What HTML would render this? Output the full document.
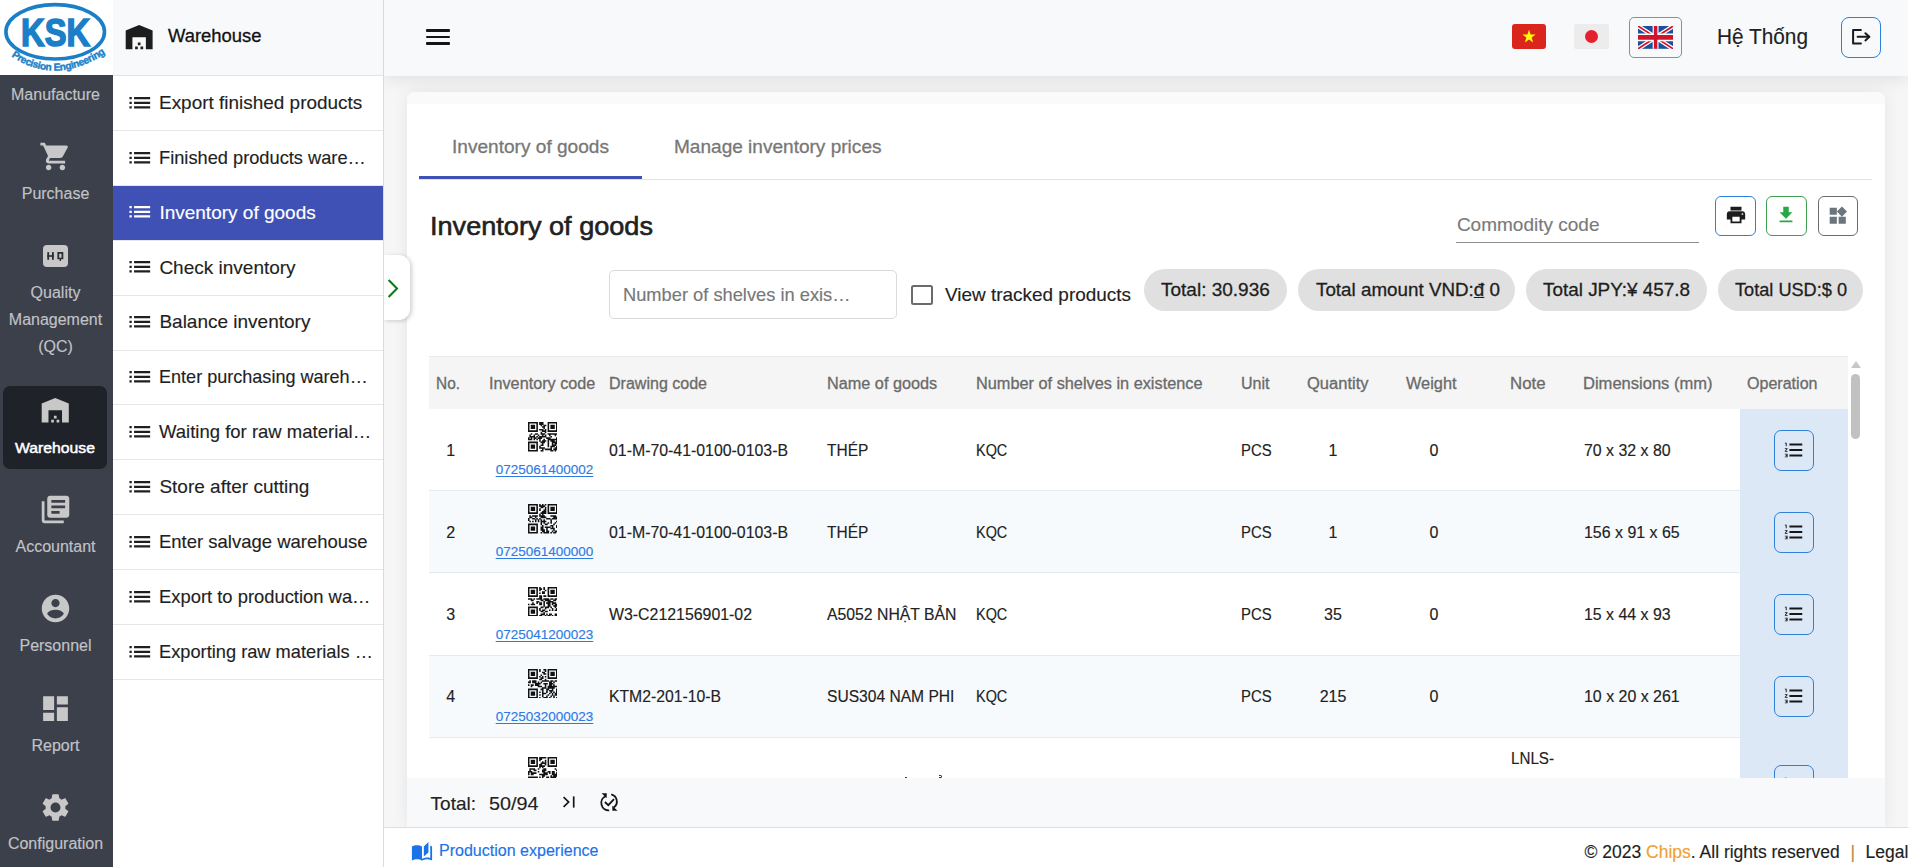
<!DOCTYPE html>
<html><head><meta charset="utf-8">
<style>
*{box-sizing:border-box;margin:0;padding:0}
html,body{width:1908px;height:867px;overflow:hidden;font-family:"Liberation Sans",sans-serif;background:#f6f6f6;color:#212121;position:relative}
.a{position:absolute}
.t{position:absolute;line-height:1;white-space:nowrap;-webkit-text-stroke:0.15px currentColor}
.med{-webkit-text-stroke:0.3px currentColor}
</style></head><body>

<div class="a" style="left:384.00px;top:0.00px;width:1524.00px;height:76.00px;background:#f8f9fb;box-shadow:0 3px 16px rgba(0,0,0,.095);z-index:2"></div>
<div class="a" style="left:407.00px;top:92.00px;width:1478.00px;height:735.00px;background:#fff;border-radius:8px 8px 0 0;box-shadow:0 0 16px rgba(0,0,0,.075)"></div>
<div class="a" style="left:407.00px;top:92.00px;width:1478.00px;height:12.00px;background:#fafafa;border-radius:8px 8px 0 0"></div>
<div class="a" style="left:384.00px;top:827.00px;width:1524.00px;height:40.00px;background:#fff;border-top:1px solid #dedede;z-index:3"></div>
<div class="a" style="left:0.00px;top:0.00px;width:113.00px;height:75.00px;background:#fff"></div>
<div class="a" style="left:0.00px;top:75.00px;width:113.00px;height:792.00px;background:#3b404b"></div>
<svg class="a" style="left:0;top:0" width="113" height="75" viewBox="0 0 113 75">
<ellipse cx="55.2" cy="31.8" rx="49.3" ry="27.2" fill="none" stroke="#1b7fc7" stroke-width="3.6"/>
<text x="55.6" y="45.6" text-anchor="middle" font-family="Liberation Sans" font-weight="700" font-size="38.5" fill="#1b7fc7" stroke="#1b7fc7" stroke-width="1.6" textLength="69" lengthAdjust="spacingAndGlyphs">KSK</text>
<path id="arc" d="M10.5 55.5 Q56 88 109 51" fill="none"/>
<text font-family="Liberation Sans" font-weight="700" font-size="10.2" fill="#1b7fc7" stroke="#1b7fc7" stroke-width="0.4" textLength="101" lengthAdjust="spacing"><textPath href="#arc" startOffset="1">Precision Engineering</textPath></text>
</svg>
<div class="t" style="left:-0.50px;width:112px;text-align:center;top:87.46px;font-size:16px;color:#c1c3c7;font-weight:400;">Manufacture</div>
<svg class="a" style="left:38.70px;top:140.25px;" width="33" height="33" viewBox="0 0 24 24"><path fill="#c8c8c8" d="M7 18c-1.1 0-1.99.9-1.99 2S5.9 22 7 22s2-.9 2-2-.9-2-2-2zM1 2v2h2l3.6 7.59-1.35 2.45c-.16.28-.25.61-.25.96 0 1.1.9 2 2 2h12v-2H7.42c-.14 0-.25-.11-.25-.25l.03-.12.9-1.63h7.45c.75 0 1.41-.41 1.75-1.03l3.58-6.49A1.003 1.003 0 0020 4H5.21l-.94-2H1zm16 16c-1.1 0-1.99.9-1.99 2s.89 2 1.99 2 2-.9 2-2-.9-2-2-2z"/></svg>
<div class="t" style="left:-0.50px;width:112px;text-align:center;top:186.06px;font-size:16px;color:#c1c3c7;font-weight:400;">Purchase</div>
<div class="a" style="left:42.80px;top:245.00px;width:25.00px;height:21.80px;background:#c8c8c8;border-radius:4px"></div>
<svg class="a" style="left:35px;top:238px" width="40" height="34" viewBox="0 0 40 34"><g fill="#2a2d33"><rect x="12.3" y="14.1" width="1.8" height="7.7"/><rect x="17" y="14.1" width="1.8" height="7.7"/><rect x="12.3" y="17.2" width="6.5" height="1.6"/><path fill-rule="evenodd" d="M22.4 14.1h5.9v7.2h-2.3v1.8h-1.3v-1.8h-2.3z M24.2 15.7v4h2.3v-4z"/></g></svg>
<div class="t" style="left:-0.50px;width:112px;text-align:center;top:285.06px;font-size:16px;color:#c1c3c7;font-weight:400;">Quality</div>
<div class="t" style="left:-0.50px;width:112px;text-align:center;top:312.46px;font-size:16px;color:#c1c3c7;font-weight:400;">Management</div>
<div class="t" style="left:-0.50px;width:112px;text-align:center;top:339.16px;font-size:16px;color:#c1c3c7;font-weight:400;">(QC)</div>
<div class="a" style="left:3.00px;top:386.00px;width:104.00px;height:82.70px;background:#1f2229;border-radius:7px"></div>
<svg class="a" style="left:38.80px;top:393.60px;" width="32.5" height="32.5" viewBox="0 0 24 24"><path fill="#c8c8c8" d="M22 21V7L12 3 2 7v14h5v-9h10v9h5zm-11-2H9v2h2v-2zm2-3h-2v2h2v-2zm2 3h-2v2h2v-2z"/></svg>
<div class="t " style="left:15.10px;top:439.88px;font-size:15.5px;color:#ffffff;font-weight:400;-webkit-text-stroke:0.5px #fff;transform:scaleX(1.0165);transform-origin:0 0;">Warehouse</div>
<svg class="a" style="left:38.75px;top:492.95px;" width="33" height="33" viewBox="0 0 24 24"><path fill="#c8c8c8" d="M4 6H2v14c0 1.1.9 2 2 2h14v-2H4V6zm16-4H8c-1.1 0-2 .9-2 2v12c0 1.1.9 2 2 2h12c1.1 0 2-.9 2-2V4c0-1.1-.9-2-2-2zm-1 9H9V9h10v2zm-4 4H9v-2h6v2zm4-8H9V5h10v2z"/></svg>
<div class="t" style="left:-0.50px;width:112px;text-align:center;top:538.66px;font-size:16px;color:#c1c3c7;font-weight:400;">Accountant</div>
<svg class="a" style="left:38.65px;top:592.15px;" width="33" height="33" viewBox="0 0 24 24"><path fill="#c8c8c8" d="M12 2C6.48 2 2 6.48 2 12s4.48 10 10 10 10-4.48 10-10S17.52 2 12 2zm0 3c1.66 0 3 1.34 3 3s-1.34 3-3 3-3-1.34-3-3 1.34-3 3-3zm0 14.2c-2.5 0-4.71-1.28-6-3.22.03-1.99 4-3.08 6-3.08 1.99 0 5.970 1.09 6 3.08-1.29 1.94-3.5 3.22-6 3.22z"/></svg>
<div class="t" style="left:-0.50px;width:112px;text-align:center;top:638.46px;font-size:16px;color:#c1c3c7;font-weight:400;">Personnel</div>
<svg class="a" style="left:38.85px;top:691.75px;" width="33" height="33" viewBox="0 0 24 24"><path fill="#c8c8c8" d="M3 13h8V3H3v10zm0 8h8v-6H3v6zm10 0h8V11h-8v10zm0-18v6h8V3h-8z"/></svg>
<div class="t" style="left:-0.50px;width:112px;text-align:center;top:737.96px;font-size:16px;color:#c1c3c7;font-weight:400;">Report</div>
<svg class="a" style="left:38.70px;top:790.90px;" width="33" height="33" viewBox="0 0 24 24"><path fill="#c8c8c8" d="M19.14 12.94c.04-.3.06-.61.06-.94 0-.32-.02-.64-.07-.94l2.03-1.58c.18-.14.23-.41.12-.61l-1.92-3.32c-.12-.22-.37-.29-.59-.22l-2.39.96c-.5-.38-1.030-.7-1.62-.94l-.36-2.54c-.04-.24-.24-.41-.48-.41h-3.84c-.24 0-.43.17-.47.41l-.36 2.54c-.59.24-1.13.57-1.62.94l-2.39-.96c-.22-.08-.47 0-.59.22L2.74 8.87c-.12.21-.08.47.12.61l2.03 1.58c-.05.3-.09.63-.09.94s.02.64.07.94l-2.03 1.58c-.18.14-.23.41-.12.61l1.92 3.32c.12.22.37.29.59.22l2.39-.96c.5.38 1.03.7 1.62.94l.36 2.54c.05.24.24.41.48.41h3.84c.24 0 .44-.17.47-.41l.36-2.54c.59-.24 1.13-.56 1.62-.94l2.39.96c.22.08.47 0 .59-.22l1.92-3.32c.12-.22.07-.47-.12-.61l-2.01-1.58zM12 15.6c-1.98 0-3.6-1.62-3.6-3.6s1.62-3.6 3.6-3.6 3.6 1.62 3.6 3.6-1.62 3.6-3.6 3.6z"/></svg>
<div class="t" style="left:-0.50px;width:112px;text-align:center;top:836.46px;font-size:16px;color:#c1c3c7;font-weight:400;">Configuration</div>
<div class="a" style="left:113.00px;top:0.00px;width:271.00px;height:867.00px;background:#fff;border-right:1px solid #dadada;z-index:4"></div>
<div class="a" style="left:113.00px;top:0.00px;width:270.00px;height:76.00px;background:#f8f9fb;border-bottom:1px solid #e3e3e3;z-index:4"></div>
<svg class="a" style="left:123.40px;top:20.90px;z-index:5" width="32.3" height="32.3" viewBox="0 0 24 24"><path fill="#1d1d1d" d="M22 21V7L12 3 2 7v14h5v-9h10v9h5zm-11-2H9v2h2v-2zm2-3h-2v2h2v-2zm2 3h-2v2h2v-2z"/></svg>
<div class="t med" style="left:167.80px;top:27.24px;font-size:18.5px;color:#111;font-weight:400;z-index:5;transform:scaleX(0.9955);transform-origin:0 0;">Warehouse</div>
<div class="a" style="left:113.00px;top:76.10px;width:270.00px;height:54.90px;background:#fff;border-bottom:1px solid #e6e6e6;z-index:4"></div>
<svg class="a" style="left:125.85px;top:88.65px;z-index:5" width="27.6" height="27.6" viewBox="0 0 24 24"><path fill="#1f1f1f" d="M3 13h2v-2H3v2zm0 4h2v-2H3v2zm0-8h2V7H3v2zm4 4h14v-2H7v2zm0 4h14v-2H7v2zM7 7v2h14V7H7z"/></svg>
<div class="t " style="left:159.40px;top:92.82px;font-size:19px;color:#1f1f1f;font-weight:400;z-index:5;transform:scaleX(0.9973);transform-origin:0 0;">Export finished products</div>
<div class="a" style="left:113.00px;top:131.00px;width:270.00px;height:54.90px;background:#fff;border-bottom:1px solid #e6e6e6;z-index:4"></div>
<svg class="a" style="left:125.85px;top:143.55px;z-index:5" width="27.6" height="27.6" viewBox="0 0 24 24"><path fill="#1f1f1f" d="M3 13h2v-2H3v2zm0 4h2v-2H3v2zm0-8h2V7H3v2zm4 4h14v-2H7v2zm0 4h14v-2H7v2zM7 7v2h14V7H7z"/></svg>
<div class="t " style="left:159.40px;top:147.72px;font-size:19px;color:#1f1f1f;font-weight:400;z-index:5;transform:scaleX(0.9599);transform-origin:0 0;">Finished products ware…</div>
<div class="a" style="left:113.00px;top:185.90px;width:270.00px;height:54.90px;background:#3f51b5;border-bottom:1px solid #e6e6e6;z-index:4"></div>
<svg class="a" style="left:125.85px;top:198.45px;z-index:5" width="27.6" height="27.6" viewBox="0 0 24 24"><path fill="#fff" d="M3 13h2v-2H3v2zm0 4h2v-2H3v2zm0-8h2V7H3v2zm4 4h14v-2H7v2zm0 4h14v-2H7v2zM7 7v2h14V7H7z"/></svg>
<div class="t " style="left:159.40px;top:202.62px;font-size:19px;color:#fff;font-weight:400;z-index:5">Inventory of goods</div>
<div class="a" style="left:113.00px;top:240.80px;width:270.00px;height:54.90px;background:#fff;border-bottom:1px solid #e6e6e6;z-index:4"></div>
<svg class="a" style="left:125.85px;top:253.35px;z-index:5" width="27.6" height="27.6" viewBox="0 0 24 24"><path fill="#1f1f1f" d="M3 13h2v-2H3v2zm0 4h2v-2H3v2zm0-8h2V7H3v2zm4 4h14v-2H7v2zm0 4h14v-2H7v2zM7 7v2h14V7H7z"/></svg>
<div class="t " style="left:159.40px;top:257.52px;font-size:19px;color:#1f1f1f;font-weight:400;z-index:5">Check inventory</div>
<div class="a" style="left:113.00px;top:295.70px;width:270.00px;height:54.90px;background:#fff;border-bottom:1px solid #e6e6e6;z-index:4"></div>
<svg class="a" style="left:125.85px;top:308.25px;z-index:5" width="27.6" height="27.6" viewBox="0 0 24 24"><path fill="#1f1f1f" d="M3 13h2v-2H3v2zm0 4h2v-2H3v2zm0-8h2V7H3v2zm4 4h14v-2H7v2zm0 4h14v-2H7v2zM7 7v2h14V7H7z"/></svg>
<div class="t " style="left:159.40px;top:312.42px;font-size:19px;color:#1f1f1f;font-weight:400;z-index:5">Balance inventory</div>
<div class="a" style="left:113.00px;top:350.60px;width:270.00px;height:54.90px;background:#fff;border-bottom:1px solid #e6e6e6;z-index:4"></div>
<svg class="a" style="left:125.85px;top:363.15px;z-index:5" width="27.6" height="27.6" viewBox="0 0 24 24"><path fill="#1f1f1f" d="M3 13h2v-2H3v2zm0 4h2v-2H3v2zm0-8h2V7H3v2zm4 4h14v-2H7v2zm0 4h14v-2H7v2zM7 7v2h14V7H7z"/></svg>
<div class="t " style="left:159.40px;top:367.32px;font-size:19px;color:#1f1f1f;font-weight:400;z-index:5;transform:scaleX(0.9501);transform-origin:0 0;">Enter purchasing wareh…</div>
<div class="a" style="left:113.00px;top:405.50px;width:270.00px;height:54.90px;background:#fff;border-bottom:1px solid #e6e6e6;z-index:4"></div>
<svg class="a" style="left:125.85px;top:418.05px;z-index:5" width="27.6" height="27.6" viewBox="0 0 24 24"><path fill="#1f1f1f" d="M3 13h2v-2H3v2zm0 4h2v-2H3v2zm0-8h2V7H3v2zm4 4h14v-2H7v2zm0 4h14v-2H7v2zM7 7v2h14V7H7z"/></svg>
<div class="t " style="left:159.40px;top:422.22px;font-size:19px;color:#1f1f1f;font-weight:400;z-index:5;transform:scaleX(0.9740);transform-origin:0 0;">Waiting for raw material…</div>
<div class="a" style="left:113.00px;top:460.40px;width:270.00px;height:54.90px;background:#fff;border-bottom:1px solid #e6e6e6;z-index:4"></div>
<svg class="a" style="left:125.85px;top:472.95px;z-index:5" width="27.6" height="27.6" viewBox="0 0 24 24"><path fill="#1f1f1f" d="M3 13h2v-2H3v2zm0 4h2v-2H3v2zm0-8h2V7H3v2zm4 4h14v-2H7v2zm0 4h14v-2H7v2zM7 7v2h14V7H7z"/></svg>
<div class="t " style="left:159.40px;top:477.12px;font-size:19px;color:#1f1f1f;font-weight:400;z-index:5">Store after cutting</div>
<div class="a" style="left:113.00px;top:515.30px;width:270.00px;height:54.90px;background:#fff;border-bottom:1px solid #e6e6e6;z-index:4"></div>
<svg class="a" style="left:125.85px;top:527.85px;z-index:5" width="27.6" height="27.6" viewBox="0 0 24 24"><path fill="#1f1f1f" d="M3 13h2v-2H3v2zm0 4h2v-2H3v2zm0-8h2V7H3v2zm4 4h14v-2H7v2zm0 4h14v-2H7v2zM7 7v2h14V7H7z"/></svg>
<div class="t " style="left:159.40px;top:532.02px;font-size:19px;color:#1f1f1f;font-weight:400;z-index:5;transform:scaleX(0.9728);transform-origin:0 0;">Enter salvage warehouse</div>
<div class="a" style="left:113.00px;top:570.20px;width:270.00px;height:54.90px;background:#fff;border-bottom:1px solid #e6e6e6;z-index:4"></div>
<svg class="a" style="left:125.85px;top:582.75px;z-index:5" width="27.6" height="27.6" viewBox="0 0 24 24"><path fill="#1f1f1f" d="M3 13h2v-2H3v2zm0 4h2v-2H3v2zm0-8h2V7H3v2zm4 4h14v-2H7v2zm0 4h14v-2H7v2zM7 7v2h14V7H7z"/></svg>
<div class="t " style="left:159.40px;top:586.92px;font-size:19px;color:#1f1f1f;font-weight:400;z-index:5;transform:scaleX(0.9674);transform-origin:0 0;">Export to production wa…</div>
<div class="a" style="left:113.00px;top:625.10px;width:270.00px;height:54.90px;background:#fff;border-bottom:1px solid #e6e6e6;z-index:4"></div>
<svg class="a" style="left:125.85px;top:637.65px;z-index:5" width="27.6" height="27.6" viewBox="0 0 24 24"><path fill="#1f1f1f" d="M3 13h2v-2H3v2zm0 4h2v-2H3v2zm0-8h2V7H3v2zm4 4h14v-2H7v2zm0 4h14v-2H7v2zM7 7v2h14V7H7z"/></svg>
<div class="t " style="left:159.40px;top:641.82px;font-size:19px;color:#1f1f1f;font-weight:400;z-index:5;transform:scaleX(0.9601);transform-origin:0 0;">Exporting raw materials …</div>
<div class="a" style="left:384px;top:254.5px;width:25.5px;height:65px;background:#fff;border-radius:0 11px 11px 0;box-shadow:2px 1px 4px rgba(0,0,0,.18);z-index:3"></div>
<svg class="a" style="left:384px;top:254.5px;z-index:4" width="26" height="65" viewBox="0 0 26 65"><path d="M4.6 25 L13 33.5 L4.6 42" fill="none" stroke="#0b7d16" stroke-width="2.1"/></svg>
<div class="a" style="left:425.80px;top:29.20px;width:24.20px;height:2.60px;background:#151515;border-radius:1px;z-index:3"></div>
<div class="a" style="left:425.80px;top:35.70px;width:24.20px;height:2.60px;background:#151515;border-radius:1px;z-index:3"></div>
<div class="a" style="left:425.80px;top:42.30px;width:24.20px;height:2.60px;background:#151515;border-radius:1px;z-index:3"></div>
<div class="a" style="left:1512.00px;top:24.20px;width:34.10px;height:24.60px;background:#da251d;border-radius:3px;z-index:3"></div>
<svg class="a" style="left:1512px;top:24.2px;z-index:4" width="34" height="25" viewBox="0 0 34 25"><polygon fill="#ffff00" points="17,5.8 18.6,10.6 23.6,10.6 19.6,13.6 21.1,18.4 17,15.5 12.9,18.4 14.4,13.6 10.4,10.6 15.4,10.6"/></svg>
<div class="a" style="left:1574.40px;top:24.20px;width:34.60px;height:24.60px;background:#ececec;border-radius:2px;z-index:3"></div>
<div class="a" style="left:1584.9px;top:29.7px;width:13.6px;height:13.6px;border-radius:50%;background:#e5202f;z-index:4"></div>
<div class="a" style="left:1629.10px;top:17.10px;width:52.80px;height:40.60px;border:1px solid #4ba6c6;border-radius:5px;background:#f8f9fb;z-index:3"></div>
<svg class="a" style="left:1637.8px;top:26px;z-index:4" width="35.2" height="22.8" viewBox="0 0 60 30" preserveAspectRatio="none">
<rect width="60" height="30" fill="#1f4e9c"/>
<path d="M0,0 L60,30 M60,0 L0,30" stroke="#fff" stroke-width="6"/>
<path d="M0,0 L60,30 M60,0 L0,30" stroke="#cf142b" stroke-width="2.4"/>
<path d="M30,0 V30 M0,15 H60" stroke="#fff" stroke-width="10"/>
<path d="M30,0 V30 M0,15 H60" stroke="#cf142b" stroke-width="6"/>
</svg>
<div class="t " style="left:1716.80px;top:26.18px;font-size:22px;color:#222;font-weight:400;z-index:3;transform:scaleX(0.9458);transform-origin:0 0;">Hệ Thống</div>
<div class="a" style="left:1841.00px;top:17.10px;width:40.00px;height:40.60px;border:1.3px solid #2e7fd8;border-radius:8px;background:#f8f9fb;z-index:3"></div>
<svg class="a" style="left:1841px;top:17px;z-index:4" width="40" height="40" viewBox="0 0 40 40">
<path d="M19.9 13 H12.1 V26.6 H19.9" fill="none" stroke="#1a1a1a" stroke-width="2" stroke-linejoin="round" stroke-linecap="round"/>
<path d="M16.6 19.8 H28.2" fill="none" stroke="#1a1a1a" stroke-width="2" stroke-linecap="round"/>
<path d="M24.4 16.2 L28.3 19.8 L24.4 23.4" fill="none" stroke="#1a1a1a" stroke-width="2" stroke-linecap="round" stroke-linejoin="round"/>
</svg>
<div class="t med" style="left:452.20px;top:136.62px;font-size:19px;color:#777;font-weight:400;;transform:scaleX(1.0043);transform-origin:0 0;">Inventory of goods</div>
<div class="t med" style="left:674.30px;top:136.62px;font-size:19px;color:#777;font-weight:400;;transform:scaleX(1.0024);transform-origin:0 0;">Manage inventory prices</div>
<div class="a" style="left:419.00px;top:179.00px;width:1453.00px;height:1.00px;background:#e3e3e3"></div>
<div class="a" style="left:418.80px;top:176.00px;width:223.00px;height:3.00px;background:#3f51b5"></div>
<div class="t " style="left:430.20px;top:213.47px;font-size:26.5px;color:#212121;font-weight:400;-webkit-text-stroke:0.6px #212121;transform:scaleX(1.0228);transform-origin:0 0;">Inventory of goods</div>
<div class="t " style="left:1456.90px;top:214.72px;font-size:19px;color:#7a7a7a;font-weight:400;">Commodity code</div>
<div class="a" style="left:1456.20px;top:241.60px;width:243.00px;height:1.00px;background:#8d8d8d"></div>
<div class="a" style="left:1715.00px;top:196.10px;width:40.90px;height:39.50px;border:1.3px solid #2f80d6;border-radius:6px"></div>
<svg class="a" style="left:1724.50px;top:203.50px;" width="22" height="22" viewBox="0 0 24 24"><path fill="#1c1c1c" d="M19 8H5c-1.66 0-3 1.34-3 3v6h4v4h12v-4h4v-6c0-1.66-1.34-3-3-3zm-3 11H8v-5h8v5zm3-7c-.55 0-1-.45-1-1s.45-1 1-1 1 .45 1 1-.45 1-1 1zm-1-9H6v4h12V3z"/></svg>
<div class="a" style="left:1766.00px;top:196.10px;width:40.90px;height:39.50px;border:1.3px solid #3f9e4f;border-radius:6px"></div>
<svg class="a" style="left:1775.30px;top:203.80px;" width="22" height="22" viewBox="0 0 24 24"><path fill="#28a745" d="M19 9h-4V3H9v6H5l7 7 7-7zM5 18v2h14v-2H5z"/></svg>
<div class="a" style="left:1818.10px;top:196.10px;width:39.60px;height:39.50px;border:1.3px solid #6c6c6c;border-radius:6px"></div>
<svg class="a" style="left:1826.60px;top:204.60px;" width="21.5" height="21.5" viewBox="0 0 24 24"><path fill="#6c757d" d="M13 13v8h8v-8h-8zM3 21h8v-8H3v8zM3 3v8h8V3H3zm13.66-1.31L11 7.34 16.66 13l5.66-5.66-5.66-5.650z"/></svg>
<div class="a" style="left:608.50px;top:269.50px;width:288.50px;height:49.00px;border:1px solid #dadada;border-radius:5px"></div>
<div class="t " style="left:623.00px;top:284.92px;font-size:19px;color:#777;font-weight:400;;transform:scaleX(0.9618);transform-origin:0 0;">Number of shelves in exis…</div>
<div class="a" style="left:911.10px;top:285.40px;width:21.60px;height:20.10px;border:2px solid #6b6b6b;border-radius:2.5px"></div>
<div class="t " style="left:944.60px;top:284.92px;font-size:19px;color:#222;font-weight:400;;transform:scaleX(0.9969);transform-origin:0 0;">View tracked products</div>
<div class="a" style="left:1144.10px;top:269.10px;width:142.60px;height:42.40px;background:#e0e0e0;border-radius:22px"></div>
<div class="t med" style="left:1161.20px;top:280.22px;font-size:19px;color:#1e1e1e;font-weight:400;;transform:scaleX(0.9999);transform-origin:0 0;">Total: 30.936</div>
<div class="a" style="left:1298.00px;top:269.10px;width:217.40px;height:42.40px;background:#e0e0e0;border-radius:22px"></div>
<div class="t med" style="left:1315.60px;top:280.22px;font-size:19px;color:#1e1e1e;font-weight:400;;transform:scaleX(0.9897);transform-origin:0 0;">Total amount VND:<u>đ</u> 0</div>
<div class="a" style="left:1526.30px;top:269.10px;width:180.30px;height:42.40px;background:#e0e0e0;border-radius:22px"></div>
<div class="t med" style="left:1543.40px;top:280.22px;font-size:19px;color:#1e1e1e;font-weight:400;;transform:scaleX(0.9940);transform-origin:0 0;">Total JPY:¥ 457.8</div>
<div class="a" style="left:1717.90px;top:269.10px;width:145.20px;height:42.40px;background:#e0e0e0;border-radius:22px"></div>
<div class="t med" style="left:1735.00px;top:280.22px;font-size:19px;color:#1e1e1e;font-weight:400;;transform:scaleX(0.9554);transform-origin:0 0;">Total USD:$ 0</div>
<div class="a" style="left:429.00px;top:356.00px;width:1419.00px;height:53.10px;background:#f5f5f5;border-top:1px solid #e6ebf0"></div>
<div class="t med" style="left:435.80px;top:376.26px;font-size:16px;color:#6a6a6a;font-weight:400;;transform:scaleX(0.9636);transform-origin:0 0;">No.</div>
<div class="t med" style="left:489.30px;top:376.26px;font-size:16px;color:#6a6a6a;font-weight:400;;transform:scaleX(1.0128);transform-origin:0 0;">Inventory code</div>
<div class="t med" style="left:609.40px;top:376.26px;font-size:16px;color:#6a6a6a;font-weight:400;;transform:scaleX(1.0018);transform-origin:0 0;">Drawing code</div>
<div class="t med" style="left:827.30px;top:376.26px;font-size:16px;color:#6a6a6a;font-weight:400;;transform:scaleX(1.0155);transform-origin:0 0;">Name of goods</div>
<div class="t med" style="left:976.00px;top:376.26px;font-size:16px;color:#6a6a6a;font-weight:400;;transform:scaleX(1.0188);transform-origin:0 0;">Number of shelves in existence</div>
<div class="t med" style="left:1241.00px;top:376.26px;font-size:16px;color:#6a6a6a;font-weight:400;;transform:scaleX(1.0016);transform-origin:0 0;">Unit</div>
<div class="t med" style="left:1307.00px;top:376.26px;font-size:16px;color:#6a6a6a;font-weight:400;;transform:scaleX(1.0320);transform-origin:0 0;">Quantity</div>
<div class="t med" style="left:1406.00px;top:376.26px;font-size:16px;color:#6a6a6a;font-weight:400;;transform:scaleX(1.0199);transform-origin:0 0;">Weight</div>
<div class="t med" style="left:1510.00px;top:376.26px;font-size:16px;color:#6a6a6a;font-weight:400;;transform:scaleX(1.0504);transform-origin:0 0;">Note</div>
<div class="t med" style="left:1583.00px;top:376.26px;font-size:16px;color:#6a6a6a;font-weight:400;;transform:scaleX(1.0332);transform-origin:0 0;">Dimensions (mm)</div>
<div class="t med" style="left:1747.00px;top:376.26px;font-size:16px;color:#6a6a6a;font-weight:400;;transform:scaleX(1.0033);transform-origin:0 0;">Operation</div>
<div class="a" style="left:429.00px;top:409.10px;width:1419.00px;height:82.15px;background:#fff;border-bottom:1px solid #e6ebf0"></div>
<div class="t" style="left:430.70px;width:40px;text-align:center;top:442.56px;font-size:16px;color:#222;font-weight:400;">1</div>
<svg class="a" style="left:527.50px;top:422.30px" width="29.5" height="29.5" viewBox="0 0 21 21"><path fill="#111" d="M-0.06 -0.06h7.12v1.12h-7.12zM7.94 -0.06h3.12v1.12h-3.12zM13.94 -0.06h7.12v1.12h-7.12zM-0.06 0.94h1.12v1.12h-1.12zM5.94 0.94h1.12v1.12h-1.12zM7.94 0.94h3.12v1.12h-3.12zM13.94 0.94h1.12v1.12h-1.12zM19.94 0.94h1.12v1.12h-1.12zM-0.06 1.94h1.12v1.12h-1.12zM1.94 1.94h3.12v1.12h-3.12zM5.94 1.94h1.12v1.12h-1.12zM8.94 1.94h1.12v1.12h-1.12zM10.94 1.94h2.12v1.12h-2.12zM13.94 1.94h1.12v1.12h-1.12zM15.94 1.94h3.12v1.12h-3.12zM19.94 1.94h1.12v1.12h-1.12zM-0.06 2.94h1.12v1.12h-1.12zM1.94 2.94h3.12v1.12h-3.12zM5.94 2.94h1.12v1.12h-1.12zM9.94 2.94h2.12v1.12h-2.12zM13.94 2.94h1.12v1.12h-1.12zM15.94 2.94h3.12v1.12h-3.12zM19.94 2.94h1.12v1.12h-1.12zM-0.06 3.94h1.12v1.12h-1.12zM1.94 3.94h3.12v1.12h-3.12zM5.94 3.94h1.12v1.12h-1.12zM10.94 3.94h1.12v1.12h-1.12zM13.94 3.94h1.12v1.12h-1.12zM15.94 3.94h3.12v1.12h-3.12zM19.94 3.94h1.12v1.12h-1.12zM-0.06 4.94h1.12v1.12h-1.12zM5.94 4.94h1.12v1.12h-1.12zM7.94 4.94h3.12v1.12h-3.12zM11.94 4.94h1.12v1.12h-1.12zM13.94 4.94h1.12v1.12h-1.12zM19.94 4.94h1.12v1.12h-1.12zM-0.06 5.94h7.12v1.12h-7.12zM9.94 5.94h3.12v1.12h-3.12zM13.94 5.94h7.12v1.12h-7.12zM8.94 6.94h1.12v1.12h-1.12zM11.94 6.94h1.12v1.12h-1.12zM1.94 7.94h1.12v1.12h-1.12zM4.94 7.94h2.12v1.12h-2.12zM8.94 7.94h3.12v1.12h-3.12zM13.94 7.94h7.12v1.12h-7.12zM0.94 8.94h1.12v1.12h-1.12zM3.94 8.94h1.12v1.12h-1.12zM6.94 8.94h1.12v1.12h-1.12zM9.94 8.94h1.12v1.12h-1.12zM11.94 8.94h1.12v1.12h-1.12zM14.94 8.94h1.12v1.12h-1.12zM18.94 8.94h1.12v1.12h-1.12zM0.94 9.94h4.12v1.12h-4.12zM5.94 9.94h1.12v1.12h-1.12zM7.94 9.94h5.12v1.12h-5.12zM15.94 9.94h1.12v1.12h-1.12zM-0.06 10.94h1.12v1.12h-1.12zM1.94 10.94h1.12v1.12h-1.12zM3.94 10.94h2.12v1.12h-2.12zM6.94 10.94h3.12v1.12h-3.12zM12.94 10.94h3.12v1.12h-3.12zM19.94 10.94h1.12v1.12h-1.12zM-0.06 11.94h3.12v1.12h-3.12zM3.94 11.94h1.12v1.12h-1.12zM5.94 11.94h1.12v1.12h-1.12zM7.94 11.94h1.12v1.12h-1.12zM10.94 11.94h1.12v1.12h-1.12zM13.94 11.94h7.12v1.12h-7.12zM7.94 12.94h1.12v1.12h-1.12zM9.94 12.94h3.12v1.12h-3.12zM13.94 12.94h1.12v1.12h-1.12zM15.94 12.94h3.12v1.12h-3.12zM19.94 12.94h1.12v1.12h-1.12zM-0.06 13.94h7.12v1.12h-7.12zM8.94 13.94h3.12v1.12h-3.12zM13.94 13.94h1.12v1.12h-1.12zM16.94 13.94h4.12v1.12h-4.12zM-0.06 14.94h1.12v1.12h-1.12zM5.94 14.94h1.12v1.12h-1.12zM9.94 14.94h1.12v1.12h-1.12zM13.94 14.94h1.12v1.12h-1.12zM16.94 14.94h1.12v1.12h-1.12zM18.94 14.94h2.12v1.12h-2.12zM-0.06 15.94h1.12v1.12h-1.12zM1.94 15.94h3.12v1.12h-3.12zM5.94 15.94h1.12v1.12h-1.12zM8.94 15.94h2.12v1.12h-2.12zM13.94 15.94h1.12v1.12h-1.12zM16.94 15.94h3.12v1.12h-3.12zM-0.06 16.94h1.12v1.12h-1.12zM1.94 16.94h3.12v1.12h-3.12zM5.94 16.94h1.12v1.12h-1.12zM7.94 16.94h1.12v1.12h-1.12zM13.94 16.94h1.12v1.12h-1.12zM15.94 16.94h3.12v1.12h-3.12zM19.94 16.94h1.12v1.12h-1.12zM-0.06 17.94h1.12v1.12h-1.12zM1.94 17.94h3.12v1.12h-3.12zM5.94 17.94h1.12v1.12h-1.12zM7.94 17.94h4.12v1.12h-4.12zM15.94 17.94h1.12v1.12h-1.12zM18.94 17.94h2.12v1.12h-2.12zM-0.06 18.94h1.12v1.12h-1.12zM5.94 18.94h1.12v1.12h-1.12zM9.94 18.94h1.12v1.12h-1.12zM11.94 18.94h5.12v1.12h-5.12zM17.94 18.94h3.12v1.12h-3.12zM-0.06 19.94h7.12v1.12h-7.12zM8.94 19.94h2.12v1.12h-2.12zM15.94 19.94h2.12v1.12h-2.12zM18.94 19.94h1.12v1.12h-1.12z"/></svg>
<div class="t " style="left:495.70px;top:463.27px;font-size:13.5px;color:#2c7be5;font-weight:400;text-decoration:underline;text-underline-offset:1.5px">0725061400002</div>
<div class="t " style="left:609.40px;top:442.56px;font-size:16px;color:#222;font-weight:400;;transform:scaleX(0.9914);transform-origin:0 0;">01-M-70-41-0100-0103-B</div>
<div class="t " style="left:827.30px;top:442.56px;font-size:16px;color:#222;font-weight:400;;transform:scaleX(0.9679);transform-origin:0 0;">THÉP</div>
<div class="t " style="left:976.30px;top:442.56px;font-size:16px;color:#222;font-weight:400;;transform:scaleX(0.9027);transform-origin:0 0;">KQC</div>
<div class="t " style="left:1240.80px;top:442.56px;font-size:16px;color:#222;font-weight:400;;transform:scaleX(0.9299);transform-origin:0 0;">PCS</div>
<div class="t" style="left:1303.00px;width:60px;text-align:center;top:442.56px;font-size:16px;color:#222;font-weight:400;">1</div>
<div class="t" style="left:1414.00px;width:40px;text-align:center;top:442.56px;font-size:16px;color:#222;font-weight:400;">0</div>
<div class="t " style="left:1583.50px;top:442.56px;font-size:16px;color:#222;font-weight:400;;transform:scaleX(0.9934);transform-origin:0 0;">70 x 32 x 80</div>
<div class="a" style="left:429.00px;top:491.25px;width:1419.00px;height:82.15px;background:#f7fafd;border-bottom:1px solid #e6ebf0"></div>
<div class="t" style="left:430.70px;width:40px;text-align:center;top:524.71px;font-size:16px;color:#222;font-weight:400;">2</div>
<svg class="a" style="left:527.50px;top:504.45px" width="29.5" height="29.5" viewBox="0 0 21 21"><path fill="#111" d="M-0.06 -0.06h7.12v1.12h-7.12zM7.94 -0.06h1.12v1.12h-1.12zM9.94 -0.06h1.12v1.12h-1.12zM11.94 -0.06h1.12v1.12h-1.12zM13.94 -0.06h7.12v1.12h-7.12zM-0.06 0.94h1.12v1.12h-1.12zM5.94 0.94h1.12v1.12h-1.12zM7.94 0.94h4.12v1.12h-4.12zM13.94 0.94h1.12v1.12h-1.12zM19.94 0.94h1.12v1.12h-1.12zM-0.06 1.94h1.12v1.12h-1.12zM1.94 1.94h3.12v1.12h-3.12zM5.94 1.94h1.12v1.12h-1.12zM8.94 1.94h2.12v1.12h-2.12zM11.94 1.94h1.12v1.12h-1.12zM13.94 1.94h1.12v1.12h-1.12zM15.94 1.94h3.12v1.12h-3.12zM19.94 1.94h1.12v1.12h-1.12zM-0.06 2.94h1.12v1.12h-1.12zM1.94 2.94h3.12v1.12h-3.12zM5.94 2.94h1.12v1.12h-1.12zM7.94 2.94h1.12v1.12h-1.12zM11.94 2.94h1.12v1.12h-1.12zM13.94 2.94h1.12v1.12h-1.12zM15.94 2.94h3.12v1.12h-3.12zM19.94 2.94h1.12v1.12h-1.12zM-0.06 3.94h1.12v1.12h-1.12zM1.94 3.94h3.12v1.12h-3.12zM5.94 3.94h1.12v1.12h-1.12zM7.94 3.94h1.12v1.12h-1.12zM10.94 3.94h2.12v1.12h-2.12zM13.94 3.94h1.12v1.12h-1.12zM15.94 3.94h3.12v1.12h-3.12zM19.94 3.94h1.12v1.12h-1.12zM-0.06 4.94h1.12v1.12h-1.12zM5.94 4.94h1.12v1.12h-1.12zM9.94 4.94h3.12v1.12h-3.12zM13.94 4.94h1.12v1.12h-1.12zM19.94 4.94h1.12v1.12h-1.12zM-0.06 5.94h7.12v1.12h-7.12zM8.94 5.94h4.12v1.12h-4.12zM13.94 5.94h7.12v1.12h-7.12zM7.94 6.94h1.12v1.12h-1.12zM9.94 6.94h1.12v1.12h-1.12zM0.94 7.94h1.12v1.12h-1.12zM2.94 7.94h4.12v1.12h-4.12zM7.94 7.94h4.12v1.12h-4.12zM15.94 7.94h4.12v1.12h-4.12zM0.94 8.94h2.12v1.12h-2.12zM4.94 8.94h1.12v1.12h-1.12zM8.94 8.94h4.12v1.12h-4.12zM17.94 8.94h3.12v1.12h-3.12zM-0.06 9.94h1.12v1.12h-1.12zM2.94 9.94h2.12v1.12h-2.12zM5.94 9.94h1.12v1.12h-1.12zM7.94 9.94h1.12v1.12h-1.12zM12.94 9.94h3.12v1.12h-3.12zM16.94 9.94h4.12v1.12h-4.12zM-0.06 10.94h1.12v1.12h-1.12zM4.94 10.94h1.12v1.12h-1.12zM6.94 10.94h1.12v1.12h-1.12zM8.94 10.94h1.12v1.12h-1.12zM10.94 10.94h1.12v1.12h-1.12zM15.94 10.94h1.12v1.12h-1.12zM0.94 11.94h1.12v1.12h-1.12zM2.94 11.94h1.12v1.12h-1.12zM4.94 11.94h1.12v1.12h-1.12zM6.94 11.94h1.12v1.12h-1.12zM8.94 11.94h4.12v1.12h-4.12zM15.94 11.94h1.12v1.12h-1.12zM19.94 11.94h1.12v1.12h-1.12zM8.94 12.94h1.12v1.12h-1.12zM10.94 12.94h1.12v1.12h-1.12zM13.94 12.94h1.12v1.12h-1.12zM15.94 12.94h1.12v1.12h-1.12zM18.94 12.94h1.12v1.12h-1.12zM-0.06 13.94h7.12v1.12h-7.12zM8.94 13.94h1.12v1.12h-1.12zM11.94 13.94h2.12v1.12h-2.12zM17.94 13.94h1.12v1.12h-1.12zM-0.06 14.94h1.12v1.12h-1.12zM5.94 14.94h1.12v1.12h-1.12zM9.94 14.94h1.12v1.12h-1.12zM15.94 14.94h2.12v1.12h-2.12zM19.94 14.94h1.12v1.12h-1.12zM-0.06 15.94h1.12v1.12h-1.12zM1.94 15.94h3.12v1.12h-3.12zM5.94 15.94h1.12v1.12h-1.12zM8.94 15.94h2.12v1.12h-2.12zM11.94 15.94h4.12v1.12h-4.12zM16.94 15.94h1.12v1.12h-1.12zM19.94 15.94h1.12v1.12h-1.12zM-0.06 16.94h1.12v1.12h-1.12zM1.94 16.94h3.12v1.12h-3.12zM5.94 16.94h1.12v1.12h-1.12zM8.94 16.94h2.12v1.12h-2.12zM12.94 16.94h1.12v1.12h-1.12zM15.94 16.94h3.12v1.12h-3.12zM-0.06 17.94h1.12v1.12h-1.12zM1.94 17.94h3.12v1.12h-3.12zM5.94 17.94h1.12v1.12h-1.12zM8.94 17.94h3.12v1.12h-3.12zM12.94 17.94h1.12v1.12h-1.12zM17.94 17.94h1.12v1.12h-1.12zM-0.06 18.94h1.12v1.12h-1.12zM5.94 18.94h1.12v1.12h-1.12zM9.94 18.94h2.12v1.12h-2.12zM12.94 18.94h2.12v1.12h-2.12zM16.94 18.94h1.12v1.12h-1.12zM18.94 18.94h2.12v1.12h-2.12zM-0.06 19.94h7.12v1.12h-7.12zM8.94 19.94h1.12v1.12h-1.12zM10.94 19.94h4.12v1.12h-4.12zM15.94 19.94h1.12v1.12h-1.12zM17.94 19.94h2.12v1.12h-2.12z"/></svg>
<div class="t " style="left:495.70px;top:545.42px;font-size:13.5px;color:#2c7be5;font-weight:400;text-decoration:underline;text-underline-offset:1.5px">0725061400000</div>
<div class="t " style="left:609.40px;top:524.71px;font-size:16px;color:#222;font-weight:400;;transform:scaleX(0.9914);transform-origin:0 0;">01-M-70-41-0100-0103-B</div>
<div class="t " style="left:827.30px;top:524.71px;font-size:16px;color:#222;font-weight:400;;transform:scaleX(0.9679);transform-origin:0 0;">THÉP</div>
<div class="t " style="left:976.30px;top:524.71px;font-size:16px;color:#222;font-weight:400;;transform:scaleX(0.9027);transform-origin:0 0;">KQC</div>
<div class="t " style="left:1240.80px;top:524.71px;font-size:16px;color:#222;font-weight:400;;transform:scaleX(0.9299);transform-origin:0 0;">PCS</div>
<div class="t" style="left:1303.00px;width:60px;text-align:center;top:524.71px;font-size:16px;color:#222;font-weight:400;">1</div>
<div class="t" style="left:1414.00px;width:40px;text-align:center;top:524.71px;font-size:16px;color:#222;font-weight:400;">0</div>
<div class="t " style="left:1583.50px;top:524.71px;font-size:16px;color:#222;font-weight:400;;transform:scaleX(0.9961);transform-origin:0 0;">156 x 91 x 65</div>
<div class="a" style="left:429.00px;top:573.40px;width:1419.00px;height:82.15px;background:#fff;border-bottom:1px solid #e6ebf0"></div>
<div class="t" style="left:430.70px;width:40px;text-align:center;top:606.86px;font-size:16px;color:#222;font-weight:400;">3</div>
<svg class="a" style="left:527.50px;top:586.60px" width="29.5" height="29.5" viewBox="0 0 21 21"><path fill="#111" d="M-0.06 -0.06h7.12v1.12h-7.12zM7.94 -0.06h1.12v1.12h-1.12zM10.94 -0.06h1.12v1.12h-1.12zM13.94 -0.06h7.12v1.12h-7.12zM-0.06 0.94h1.12v1.12h-1.12zM5.94 0.94h1.12v1.12h-1.12zM7.94 0.94h2.12v1.12h-2.12zM10.94 0.94h1.12v1.12h-1.12zM13.94 0.94h1.12v1.12h-1.12zM19.94 0.94h1.12v1.12h-1.12zM-0.06 1.94h1.12v1.12h-1.12zM1.94 1.94h3.12v1.12h-3.12zM5.94 1.94h1.12v1.12h-1.12zM7.94 1.94h1.12v1.12h-1.12zM11.94 1.94h1.12v1.12h-1.12zM13.94 1.94h1.12v1.12h-1.12zM15.94 1.94h3.12v1.12h-3.12zM19.94 1.94h1.12v1.12h-1.12zM-0.06 2.94h1.12v1.12h-1.12zM1.94 2.94h3.12v1.12h-3.12zM5.94 2.94h1.12v1.12h-1.12zM9.94 2.94h2.12v1.12h-2.12zM13.94 2.94h1.12v1.12h-1.12zM15.94 2.94h3.12v1.12h-3.12zM19.94 2.94h1.12v1.12h-1.12zM-0.06 3.94h1.12v1.12h-1.12zM1.94 3.94h3.12v1.12h-3.12zM5.94 3.94h1.12v1.12h-1.12zM7.94 3.94h1.12v1.12h-1.12zM9.94 3.94h2.12v1.12h-2.12zM13.94 3.94h1.12v1.12h-1.12zM15.94 3.94h3.12v1.12h-3.12zM19.94 3.94h1.12v1.12h-1.12zM-0.06 4.94h1.12v1.12h-1.12zM5.94 4.94h1.12v1.12h-1.12zM13.94 4.94h1.12v1.12h-1.12zM19.94 4.94h1.12v1.12h-1.12zM-0.06 5.94h7.12v1.12h-7.12zM7.94 5.94h2.12v1.12h-2.12zM10.94 5.94h2.12v1.12h-2.12zM13.94 5.94h7.12v1.12h-7.12zM7.94 6.94h2.12v1.12h-2.12zM-0.06 7.94h3.12v1.12h-3.12zM3.94 7.94h1.12v1.12h-1.12zM5.94 7.94h4.12v1.12h-4.12zM10.94 7.94h4.12v1.12h-4.12zM15.94 7.94h2.12v1.12h-2.12zM18.94 7.94h2.12v1.12h-2.12zM1.94 8.94h2.12v1.12h-2.12zM8.94 8.94h2.12v1.12h-2.12zM11.94 8.94h4.12v1.12h-4.12zM17.94 8.94h2.12v1.12h-2.12zM5.94 9.94h2.12v1.12h-2.12zM10.94 9.94h1.12v1.12h-1.12zM13.94 9.94h4.12v1.12h-4.12zM2.94 10.94h1.12v1.12h-1.12zM5.94 10.94h1.12v1.12h-1.12zM7.94 10.94h2.12v1.12h-2.12zM10.94 10.94h1.12v1.12h-1.12zM12.94 10.94h3.12v1.12h-3.12zM16.94 10.94h3.12v1.12h-3.12zM-0.06 11.94h1.12v1.12h-1.12zM1.94 11.94h3.12v1.12h-3.12zM7.94 11.94h2.12v1.12h-2.12zM10.94 11.94h1.12v1.12h-1.12zM13.94 11.94h2.12v1.12h-2.12zM16.94 11.94h1.12v1.12h-1.12zM18.94 11.94h2.12v1.12h-2.12zM10.94 12.94h1.12v1.12h-1.12zM13.94 12.94h2.12v1.12h-2.12zM17.94 12.94h3.12v1.12h-3.12zM-0.06 13.94h7.12v1.12h-7.12zM8.94 13.94h2.12v1.12h-2.12zM11.94 13.94h3.12v1.12h-3.12zM15.94 13.94h1.12v1.12h-1.12zM18.94 13.94h1.12v1.12h-1.12zM-0.06 14.94h1.12v1.12h-1.12zM5.94 14.94h1.12v1.12h-1.12zM7.94 14.94h1.12v1.12h-1.12zM11.94 14.94h1.12v1.12h-1.12zM16.94 14.94h1.12v1.12h-1.12zM19.94 14.94h1.12v1.12h-1.12zM-0.06 15.94h1.12v1.12h-1.12zM1.94 15.94h3.12v1.12h-3.12zM5.94 15.94h1.12v1.12h-1.12zM7.94 15.94h1.12v1.12h-1.12zM9.94 15.94h2.12v1.12h-2.12zM14.94 15.94h1.12v1.12h-1.12zM16.94 15.94h1.12v1.12h-1.12zM18.94 15.94h2.12v1.12h-2.12zM-0.06 16.94h1.12v1.12h-1.12zM1.94 16.94h3.12v1.12h-3.12zM5.94 16.94h1.12v1.12h-1.12zM8.94 16.94h2.12v1.12h-2.12zM11.94 16.94h2.12v1.12h-2.12zM-0.06 17.94h1.12v1.12h-1.12zM1.94 17.94h3.12v1.12h-3.12zM5.94 17.94h1.12v1.12h-1.12zM10.94 17.94h1.12v1.12h-1.12zM-0.06 18.94h1.12v1.12h-1.12zM5.94 18.94h1.12v1.12h-1.12zM8.94 18.94h3.12v1.12h-3.12zM12.94 18.94h1.12v1.12h-1.12zM14.94 18.94h2.12v1.12h-2.12zM18.94 18.94h2.12v1.12h-2.12zM-0.06 19.94h7.12v1.12h-7.12zM7.94 19.94h2.12v1.12h-2.12zM11.94 19.94h1.12v1.12h-1.12zM13.94 19.94h2.12v1.12h-2.12zM16.94 19.94h1.12v1.12h-1.12zM18.94 19.94h2.12v1.12h-2.12z"/></svg>
<div class="t " style="left:495.70px;top:627.57px;font-size:13.5px;color:#2c7be5;font-weight:400;text-decoration:underline;text-underline-offset:1.5px">0725041200023</div>
<div class="t " style="left:609.40px;top:606.86px;font-size:16px;color:#222;font-weight:400;;transform:scaleX(0.9924);transform-origin:0 0;">W3-C212156901-02</div>
<div class="t " style="left:827.30px;top:606.86px;font-size:16px;color:#222;font-weight:400;;transform:scaleX(0.9861);transform-origin:0 0;">A5052 NHẬT BẢN</div>
<div class="t " style="left:976.30px;top:606.86px;font-size:16px;color:#222;font-weight:400;;transform:scaleX(0.9027);transform-origin:0 0;">KQC</div>
<div class="t " style="left:1240.80px;top:606.86px;font-size:16px;color:#222;font-weight:400;;transform:scaleX(0.9299);transform-origin:0 0;">PCS</div>
<div class="t" style="left:1303.00px;width:60px;text-align:center;top:606.86px;font-size:16px;color:#222;font-weight:400;">35</div>
<div class="t" style="left:1414.00px;width:40px;text-align:center;top:606.86px;font-size:16px;color:#222;font-weight:400;">0</div>
<div class="t " style="left:1583.50px;top:606.86px;font-size:16px;color:#222;font-weight:400;;transform:scaleX(0.9934);transform-origin:0 0;">15 x 44 x 93</div>
<div class="a" style="left:429.00px;top:655.55px;width:1419.00px;height:82.15px;background:#f7fafd;border-bottom:1px solid #e6ebf0"></div>
<div class="t" style="left:430.70px;width:40px;text-align:center;top:689.01px;font-size:16px;color:#222;font-weight:400;">4</div>
<svg class="a" style="left:527.50px;top:668.75px" width="29.5" height="29.5" viewBox="0 0 21 21"><path fill="#111" d="M-0.06 -0.06h7.12v1.12h-7.12zM7.94 -0.06h1.12v1.12h-1.12zM10.94 -0.06h2.12v1.12h-2.12zM13.94 -0.06h7.12v1.12h-7.12zM-0.06 0.94h1.12v1.12h-1.12zM5.94 0.94h1.12v1.12h-1.12zM7.94 0.94h1.12v1.12h-1.12zM11.94 0.94h1.12v1.12h-1.12zM13.94 0.94h1.12v1.12h-1.12zM19.94 0.94h1.12v1.12h-1.12zM-0.06 1.94h1.12v1.12h-1.12zM1.94 1.94h3.12v1.12h-3.12zM5.94 1.94h1.12v1.12h-1.12zM9.94 1.94h2.12v1.12h-2.12zM13.94 1.94h1.12v1.12h-1.12zM15.94 1.94h3.12v1.12h-3.12zM19.94 1.94h1.12v1.12h-1.12zM-0.06 2.94h1.12v1.12h-1.12zM1.94 2.94h3.12v1.12h-3.12zM5.94 2.94h1.12v1.12h-1.12zM10.94 2.94h2.12v1.12h-2.12zM13.94 2.94h1.12v1.12h-1.12zM15.94 2.94h3.12v1.12h-3.12zM19.94 2.94h1.12v1.12h-1.12zM-0.06 3.94h1.12v1.12h-1.12zM1.94 3.94h3.12v1.12h-3.12zM5.94 3.94h1.12v1.12h-1.12zM8.94 3.94h1.12v1.12h-1.12zM13.94 3.94h1.12v1.12h-1.12zM15.94 3.94h3.12v1.12h-3.12zM19.94 3.94h1.12v1.12h-1.12zM-0.06 4.94h1.12v1.12h-1.12zM5.94 4.94h1.12v1.12h-1.12zM7.94 4.94h1.12v1.12h-1.12zM9.94 4.94h1.12v1.12h-1.12zM11.94 4.94h1.12v1.12h-1.12zM13.94 4.94h1.12v1.12h-1.12zM19.94 4.94h1.12v1.12h-1.12zM-0.06 5.94h7.12v1.12h-7.12zM8.94 5.94h2.12v1.12h-2.12zM13.94 5.94h7.12v1.12h-7.12zM7.94 6.94h2.12v1.12h-2.12zM11.94 6.94h1.12v1.12h-1.12zM0.94 7.94h1.12v1.12h-1.12zM2.94 7.94h3.12v1.12h-3.12zM9.94 7.94h5.12v1.12h-5.12zM15.94 7.94h2.12v1.12h-2.12zM18.94 7.94h2.12v1.12h-2.12zM-0.06 8.94h2.12v1.12h-2.12zM2.94 8.94h3.12v1.12h-3.12zM6.94 8.94h1.12v1.12h-1.12zM8.94 8.94h1.12v1.12h-1.12zM14.94 8.94h2.12v1.12h-2.12zM17.94 8.94h1.12v1.12h-1.12zM4.94 9.94h4.12v1.12h-4.12zM10.94 9.94h3.12v1.12h-3.12zM14.94 9.94h3.12v1.12h-3.12zM-0.06 10.94h1.12v1.12h-1.12zM1.94 10.94h2.12v1.12h-2.12zM4.94 10.94h3.12v1.12h-3.12zM11.94 10.94h1.12v1.12h-1.12zM14.94 10.94h2.12v1.12h-2.12zM17.94 10.94h1.12v1.12h-1.12zM1.94 11.94h1.12v1.12h-1.12zM6.94 11.94h3.12v1.12h-3.12zM11.94 11.94h1.12v1.12h-1.12zM13.94 11.94h7.12v1.12h-7.12zM9.94 12.94h3.12v1.12h-3.12zM13.94 12.94h5.12v1.12h-5.12zM-0.06 13.94h7.12v1.12h-7.12zM8.94 13.94h2.12v1.12h-2.12zM12.94 13.94h2.12v1.12h-2.12zM16.94 13.94h1.12v1.12h-1.12zM19.94 13.94h1.12v1.12h-1.12zM-0.06 14.94h1.12v1.12h-1.12zM5.94 14.94h1.12v1.12h-1.12zM9.94 14.94h1.12v1.12h-1.12zM12.94 14.94h1.12v1.12h-1.12zM14.94 14.94h3.12v1.12h-3.12zM19.94 14.94h1.12v1.12h-1.12zM-0.06 15.94h1.12v1.12h-1.12zM1.94 15.94h3.12v1.12h-3.12zM5.94 15.94h1.12v1.12h-1.12zM7.94 15.94h1.12v1.12h-1.12zM9.94 15.94h1.12v1.12h-1.12zM12.94 15.94h1.12v1.12h-1.12zM15.94 15.94h1.12v1.12h-1.12zM17.94 15.94h1.12v1.12h-1.12zM19.94 15.94h1.12v1.12h-1.12zM-0.06 16.94h1.12v1.12h-1.12zM1.94 16.94h3.12v1.12h-3.12zM5.94 16.94h1.12v1.12h-1.12zM9.94 16.94h3.12v1.12h-3.12zM14.94 16.94h1.12v1.12h-1.12zM16.94 16.94h1.12v1.12h-1.12zM18.94 16.94h2.12v1.12h-2.12zM-0.06 17.94h1.12v1.12h-1.12zM1.94 17.94h3.12v1.12h-3.12zM5.94 17.94h1.12v1.12h-1.12zM7.94 17.94h1.12v1.12h-1.12zM9.94 17.94h1.12v1.12h-1.12zM13.94 17.94h1.12v1.12h-1.12zM16.94 17.94h1.12v1.12h-1.12zM18.94 17.94h2.12v1.12h-2.12zM-0.06 18.94h1.12v1.12h-1.12zM5.94 18.94h1.12v1.12h-1.12zM9.94 18.94h1.12v1.12h-1.12zM12.94 18.94h1.12v1.12h-1.12zM15.94 18.94h1.12v1.12h-1.12zM17.94 18.94h1.12v1.12h-1.12zM-0.06 19.94h7.12v1.12h-7.12zM7.94 19.94h1.12v1.12h-1.12zM10.94 19.94h3.12v1.12h-3.12zM14.94 19.94h1.12v1.12h-1.12zM17.94 19.94h1.12v1.12h-1.12zM19.94 19.94h1.12v1.12h-1.12z"/></svg>
<div class="t " style="left:495.70px;top:709.72px;font-size:13.5px;color:#2c7be5;font-weight:400;text-decoration:underline;text-underline-offset:1.5px">0725032000023</div>
<div class="t " style="left:609.40px;top:689.01px;font-size:16px;color:#222;font-weight:400;;transform:scaleX(0.9839);transform-origin:0 0;">KTM2-201-10-B</div>
<div class="t " style="left:827.30px;top:689.01px;font-size:16px;color:#222;font-weight:400;;transform:scaleX(0.9746);transform-origin:0 0;">SUS304 NAM PHI</div>
<div class="t " style="left:976.30px;top:689.01px;font-size:16px;color:#222;font-weight:400;;transform:scaleX(0.9027);transform-origin:0 0;">KQC</div>
<div class="t " style="left:1240.80px;top:689.01px;font-size:16px;color:#222;font-weight:400;;transform:scaleX(0.9299);transform-origin:0 0;">PCS</div>
<div class="t" style="left:1303.00px;width:60px;text-align:center;top:689.01px;font-size:16px;color:#222;font-weight:400;">215</div>
<div class="t" style="left:1414.00px;width:40px;text-align:center;top:689.01px;font-size:16px;color:#222;font-weight:400;">0</div>
<div class="t " style="left:1583.50px;top:689.01px;font-size:16px;color:#222;font-weight:400;;transform:scaleX(0.9961);transform-origin:0 0;">10 x 20 x 261</div>
<div class="a" style="left:429.00px;top:737.70px;width:1419.00px;height:40.30px;background:#fff"></div>
<svg class="a" style="left:527.50px;top:756.70px" width="29.5" height="29.5" viewBox="0 0 21 21"><path fill="#111" d="M-0.06 -0.06h7.12v1.12h-7.12zM7.94 -0.06h5.12v1.12h-5.12zM13.94 -0.06h7.12v1.12h-7.12zM-0.06 0.94h1.12v1.12h-1.12zM5.94 0.94h1.12v1.12h-1.12zM7.94 0.94h2.12v1.12h-2.12zM13.94 0.94h1.12v1.12h-1.12zM19.94 0.94h1.12v1.12h-1.12zM-0.06 1.94h1.12v1.12h-1.12zM1.94 1.94h3.12v1.12h-3.12zM5.94 1.94h1.12v1.12h-1.12zM7.94 1.94h1.12v1.12h-1.12zM11.94 1.94h1.12v1.12h-1.12zM13.94 1.94h1.12v1.12h-1.12zM15.94 1.94h3.12v1.12h-3.12zM19.94 1.94h1.12v1.12h-1.12zM-0.06 2.94h1.12v1.12h-1.12zM1.94 2.94h3.12v1.12h-3.12zM5.94 2.94h1.12v1.12h-1.12zM9.94 2.94h1.12v1.12h-1.12zM11.94 2.94h1.12v1.12h-1.12zM13.94 2.94h1.12v1.12h-1.12zM15.94 2.94h3.12v1.12h-3.12zM19.94 2.94h1.12v1.12h-1.12zM-0.06 3.94h1.12v1.12h-1.12zM1.94 3.94h3.12v1.12h-3.12zM5.94 3.94h1.12v1.12h-1.12zM8.94 3.94h4.12v1.12h-4.12zM13.94 3.94h1.12v1.12h-1.12zM15.94 3.94h3.12v1.12h-3.12zM19.94 3.94h1.12v1.12h-1.12zM-0.06 4.94h1.12v1.12h-1.12zM5.94 4.94h1.12v1.12h-1.12zM7.94 4.94h2.12v1.12h-2.12zM11.94 4.94h1.12v1.12h-1.12zM13.94 4.94h1.12v1.12h-1.12zM19.94 4.94h1.12v1.12h-1.12zM-0.06 5.94h7.12v1.12h-7.12zM7.94 5.94h4.12v1.12h-4.12zM13.94 5.94h7.12v1.12h-7.12zM7.94 6.94h1.12v1.12h-1.12zM9.94 6.94h1.12v1.12h-1.12zM0.94 7.94h4.12v1.12h-4.12zM6.94 7.94h1.12v1.12h-1.12zM10.94 7.94h2.12v1.12h-2.12zM18.94 7.94h1.12v1.12h-1.12zM0.94 8.94h1.12v1.12h-1.12zM3.94 8.94h2.12v1.12h-2.12zM9.94 8.94h3.12v1.12h-3.12zM19.94 8.94h1.12v1.12h-1.12zM-0.06 9.94h3.12v1.12h-3.12zM6.94 9.94h1.12v1.12h-1.12zM9.94 9.94h2.12v1.12h-2.12zM13.94 9.94h2.12v1.12h-2.12zM16.94 9.94h2.12v1.12h-2.12zM-0.06 10.94h1.12v1.12h-1.12zM1.94 10.94h4.12v1.12h-4.12zM10.94 10.94h3.12v1.12h-3.12zM14.94 10.94h1.12v1.12h-1.12zM16.94 10.94h2.12v1.12h-2.12zM19.94 10.94h1.12v1.12h-1.12zM-0.06 11.94h1.12v1.12h-1.12zM1.94 11.94h2.12v1.12h-2.12zM7.94 11.94h6.12v1.12h-6.12zM16.94 11.94h4.12v1.12h-4.12zM9.94 12.94h2.12v1.12h-2.12zM15.94 12.94h1.12v1.12h-1.12zM17.94 12.94h3.12v1.12h-3.12zM-0.06 13.94h7.12v1.12h-7.12zM7.94 13.94h1.12v1.12h-1.12zM9.94 13.94h1.12v1.12h-1.12zM12.94 13.94h2.12v1.12h-2.12zM15.94 13.94h4.12v1.12h-4.12zM-0.06 14.94h1.12v1.12h-1.12zM5.94 14.94h1.12v1.12h-1.12zM8.94 14.94h2.12v1.12h-2.12zM11.94 14.94h1.12v1.12h-1.12zM13.94 14.94h2.12v1.12h-2.12zM16.94 14.94h4.12v1.12h-4.12zM-0.06 15.94h1.12v1.12h-1.12zM1.94 15.94h3.12v1.12h-3.12zM5.94 15.94h1.12v1.12h-1.12zM7.94 15.94h3.12v1.12h-3.12zM14.94 15.94h1.12v1.12h-1.12zM19.94 15.94h1.12v1.12h-1.12zM-0.06 16.94h1.12v1.12h-1.12zM1.94 16.94h3.12v1.12h-3.12zM5.94 16.94h1.12v1.12h-1.12zM8.94 16.94h1.12v1.12h-1.12zM10.94 16.94h2.12v1.12h-2.12zM13.94 16.94h1.12v1.12h-1.12zM15.94 16.94h3.12v1.12h-3.12zM19.94 16.94h1.12v1.12h-1.12zM-0.06 17.94h1.12v1.12h-1.12zM1.94 17.94h3.12v1.12h-3.12zM5.94 17.94h1.12v1.12h-1.12zM7.94 17.94h1.12v1.12h-1.12zM10.94 17.94h4.12v1.12h-4.12zM17.94 17.94h2.12v1.12h-2.12zM-0.06 18.94h1.12v1.12h-1.12zM5.94 18.94h1.12v1.12h-1.12zM7.94 18.94h1.12v1.12h-1.12zM10.94 18.94h2.12v1.12h-2.12zM13.94 18.94h7.12v1.12h-7.12zM-0.06 19.94h7.12v1.12h-7.12zM7.94 19.94h3.12v1.12h-3.12zM11.94 19.94h1.12v1.12h-1.12zM13.94 19.94h1.12v1.12h-1.12zM17.94 19.94h1.12v1.12h-1.12zM19.94 19.94h1.12v1.12h-1.12z"/></svg>
<div class="t " style="left:1511.30px;top:750.66px;font-size:16px;color:#222;font-weight:400;;transform:scaleX(0.9480);transform-origin:0 0;">LNLS-</div>
<div class="a" style="left:904.60px;top:776.60px;width:2.40px;height:1.40px;background:#222;border-radius:1px"></div>
<div class="a" style="left:939.00px;top:775.00px;width:2.60px;height:3.00px;border:1px solid #333;border-left:none;border-radius:0 2px 2px 0"></div>
<div class="a" style="left:1740.00px;top:409.10px;width:108.00px;height:368.90px;background:#dce8f6"></div>
<div class="a" style="left:1773.90px;top:429.90px;width:40.20px;height:40.90px;border:1.3px solid #2f80d6;border-radius:7px"></div>
<svg class="a" style="left:1783.00px;top:438.70px;" width="22" height="22" viewBox="0 0 24 24"><path fill="#161616" d="M2 17h2v.5H3v1h1v.5H2v1h3v-4H2v1zm1-9h1V4H2v1h1v3zm-1 3h1.8L2 13.1v.9h3v-1H3.2L5 10.9V10H2v1zm5-6v2h14V5H7zm0 14h14v-2H7v2zm0-6h14v-2H7v2z"/></svg>
<div class="a" style="left:1773.90px;top:512.05px;width:40.20px;height:40.90px;border:1.3px solid #2f80d6;border-radius:7px"></div>
<svg class="a" style="left:1783.00px;top:520.85px;" width="22" height="22" viewBox="0 0 24 24"><path fill="#161616" d="M2 17h2v.5H3v1h1v.5H2v1h3v-4H2v1zm1-9h1V4H2v1h1v3zm-1 3h1.8L2 13.1v.9h3v-1H3.2L5 10.9V10H2v1zm5-6v2h14V5H7zm0 14h14v-2H7v2zm0-6h14v-2H7v2z"/></svg>
<div class="a" style="left:1773.90px;top:594.20px;width:40.20px;height:40.90px;border:1.3px solid #2f80d6;border-radius:7px"></div>
<svg class="a" style="left:1783.00px;top:603.00px;" width="22" height="22" viewBox="0 0 24 24"><path fill="#161616" d="M2 17h2v.5H3v1h1v.5H2v1h3v-4H2v1zm1-9h1V4H2v1h1v3zm-1 3h1.8L2 13.1v.9h3v-1H3.2L5 10.9V10H2v1zm5-6v2h14V5H7zm0 14h14v-2H7v2zm0-6h14v-2H7v2z"/></svg>
<div class="a" style="left:1773.90px;top:676.35px;width:40.20px;height:40.90px;border:1.3px solid #2f80d6;border-radius:7px"></div>
<svg class="a" style="left:1783.00px;top:685.15px;" width="22" height="22" viewBox="0 0 24 24"><path fill="#161616" d="M2 17h2v.5H3v1h1v.5H2v1h3v-4H2v1zm1-9h1V4H2v1h1v3zm-1 3h1.8L2 13.1v.9h3v-1H3.2L5 10.9V10H2v1zm5-6v2h14V5H7zm0 14h14v-2H7v2zm0-6h14v-2H7v2z"/></svg>
<div class="a" style="left:1773.90px;top:765.10px;width:40.20px;height:40.90px;border:1.3px solid #2f80d6;border-radius:7px"></div>
<svg class="a" style="left:1783.00px;top:773.90px;" width="22" height="22" viewBox="0 0 24 24"><path fill="#161616" d="M2 17h2v.5H3v1h1v.5H2v1h3v-4H2v1zm1-9h1V4H2v1h1v3zm-1 3h1.8L2 13.1v.9h3v-1H3.2L5 10.9V10H2v1zm5-6v2h14V5H7zm0 14h14v-2H7v2zm0-6h14v-2H7v2z"/></svg>
<svg class="a" style="left:1850px;top:359px" width="12" height="10" viewBox="0 0 12 10"><polygon points="1,9 11,9 6,2" fill="#c7c7c7"/></svg>
<div class="a" style="left:1851.00px;top:374.20px;width:9.00px;height:64.90px;background:#c1c1c1;border-radius:5px"></div>
<div class="a" style="left:407.00px;top:778.00px;width:1478.00px;height:49.00px;background:#f8f9fa"></div>
<div class="t " style="left:430.60px;top:793.92px;font-size:19px;color:#222;font-weight:400;">Total:</div>
<div class="t " style="left:488.60px;top:793.92px;font-size:19px;color:#222;font-weight:400;;transform:scaleX(1.0411);transform-origin:0 0;">50/94</div>
<svg class="a" style="left:560px;top:793px" width="20" height="18" viewBox="0 0 20 18">
<path d="M3.6 4.2 L8.6 9 L3.6 13.8" fill="none" stroke="#141414" stroke-width="1.7"/>
<path d="M13.7 3.4 V14.6" fill="none" stroke="#141414" stroke-width="1.7"/>
</svg>
<svg class="a" style="left:598px;top:791px" width="23" height="22" viewBox="0 0 23 22">
<path d="M7.6 5.2 A7.4 7.4 0 0 0 11.2 19.3" fill="none" stroke="#141414" stroke-width="1.8"/>
<path d="M13.2 3.3 A7.4 7.4 0 0 1 15.6 16.6" fill="none" stroke="#141414" stroke-width="1.8"/>
<path d="M3.6 2.3 L8.8 2.3 L8.6 7.2 Z" fill="#141414"/>
<path d="M14.2 14.8 L14.4 19.8 L19.6 19.8 Z" fill="#141414"/>
<path d="M6.9 11 L10.3 14.2 L16 8.1" fill="none" stroke="#141414" stroke-width="1.8"/>
</svg>
<svg class="a" style="left:411.00px;top:841.10px;z-index:4" width="22" height="22" viewBox="0 0 24 24"><path fill="#1a73e8" d="M19 1l-5 5v11l5-4.5V1zM1 6v14.65c0 .25.25.5.5.5.1 0 .15-.05.25-.05C3.1 20.45 5.05 20 6.5 20c1.95 0 4.05.4 5.5 1.5V6c-1.45-1.1-3.55-1.5-5.5-1.5S2.45 4.9 1 6zm22 13.5V6c-.6-.45-1.25-.75-2-1v13.5c-1.1-.35-2.3-.5-3.5-.5-1.7 0-4.15.65-5.5 1.5v2c1.35-.85 3.8-1.5 5.5-1.5 1.65 0 3.35.3 4.75 1.05.1.05.15.05.25.05.25 0 .5-.25.5-.5v-1.1z"/></svg>
<div class="t " style="left:439.20px;top:842.76px;font-size:16px;color:#1a73e8;font-weight:400;z-index:4;transform:scaleX(1.0018);transform-origin:0 0;">Production experience</div>
<div class="t" style="left:1584.5px;top:843.89px;font-size:17.5px;color:#1e1e1e;z-index:4">© 2023 <span style="color:#f0a132">Chips</span>. All rights reserved</div>
<div class="t " style="left:1850.50px;top:843.89px;font-size:17.5px;color:#b88a3a;font-weight:400;z-index:4">|</div>
<div class="t " style="left:1865.50px;top:843.89px;font-size:17.5px;color:#1e1e1e;font-weight:400;z-index:4">Legal</div>
</body></html>
